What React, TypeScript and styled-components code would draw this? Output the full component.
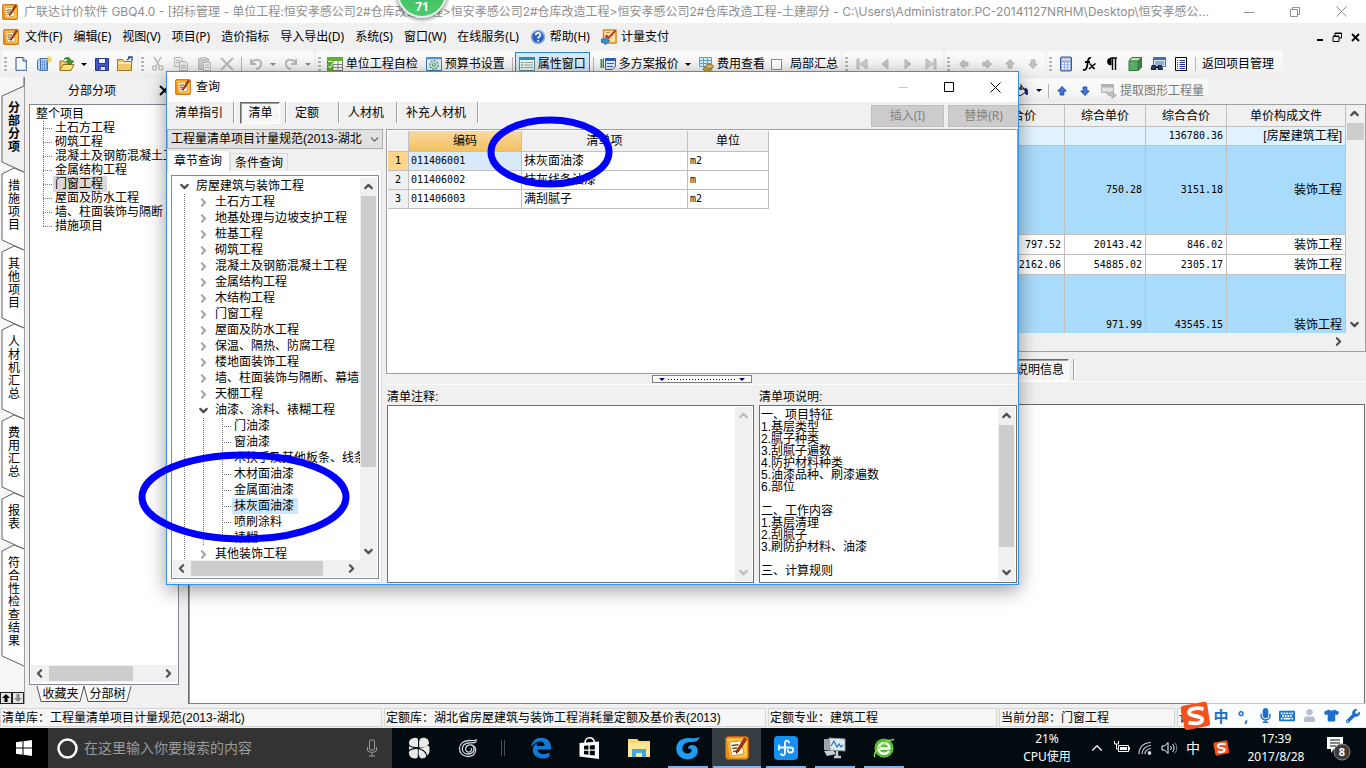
import React from 'react';
import styled, { createGlobalStyle, css } from 'styled-components';
import { ChevronDown, ChevronLeft, ChevronRight, ChevronUp } from 'lucide-react';
import { FaKeyboard, FaMicrophone, FaTshirt, FaUser, FaWrench } from 'react-icons/fa';

const songti = '"Liberation Sans", "Noto Sans CJK SC", sans-serif';
const yahei = '"Noto Sans", "Noto Sans CJK SC", sans-serif';
const digits = '"DejaVu Sans Mono", "Noto Sans CJK SC", monospace';

const face = '#f0f0f0';
const gridLine = '#c0c0c0';
const hatch = css`
  background-color: #fff;
  background-image: repeating-conic-gradient(${face} 0 25%, #fff 0 50%);
  background-size: 2px 2px;
`;

const GlobalStyle = createGlobalStyle`
  *, *::before, *::after { box-sizing: border-box; }
  body { margin: 0; background: ${face}; overflow: hidden; }
  button, input, select, textarea { font: inherit; color: inherit; margin: 0; }
  button { padding: 0; border: 0; background: none; white-space: nowrap; }
  ul { list-style: none; margin: 0; padding: 0; }
  svg { display: block; flex: none; }
`;

const Desktop = styled.div`
  position: relative;
  display: flex;
  flex-direction: column;
  min-height: 100vh;
  overflow: hidden;
  background: ${face};
  color: #000;
  font: 12px/16px ${songti};
  white-space: nowrap;
`;

/* ---------- Title bar and menu ---------- */

const TitleBar = styled.header`
  display: flex;
  align-items: center;
  height: 23px;
  padding: 0 2px;
  background: #fff;
  color: #8f8f8f;
  font-family: Inter, "Noto Sans CJK SC", sans-serif;
`;

const TitleText = styled.h1`
  flex: 1;
  margin: 0;
  padding-left: 6px;
  font-size: 12px;
  font-weight: 400;
  overflow: hidden;
  text-overflow: ellipsis;
`;

const CaptionButton = styled.button<{ $faded?: boolean }>`
  display: flex;
  align-items: center;
  justify-content: center;
  width: 46px;
  height: 100%;
  color: ${(p) => (p.$faded ? '#c8c8c8' : 'inherit')};
`;

const MenuBar = styled.nav`
  display: flex;
  align-items: center;
  height: 28px;
  padding: 0 6px 0 3px;
  font-family: ${yahei};
`;

const MenuItem = styled.button`
  display: flex;
  align-items: center;
  gap: 4px;
  padding: 0 5px 0 6px;
`;

const MdiButtons = styled.div`
  display: flex;
  align-items: center;
  gap: 8px;
  margin-left: auto;
`;

/* ---------- Toolbars ---------- */

const Toolbar = styled.div`
  display: flex;
  gap: 2px;
  height: 26px;
  padding: 0 2px;
  font-family: ${yahei};
`;

const ToolGroup = styled.div<{ $width?: number }>`
  display: flex;
  align-items: center;
  width: ${(p) => (p.$width ? `${p.$width}px` : 'auto')};
  padding-left: 2px;
  border-radius: 3px;
  background: linear-gradient(#fbfbfb, #f6f6f6 60%, #ececec);
`;

const Grip = styled.span`
  width: 3px;
  height: 15px;
  margin-right: 2px;
  background: repeating-linear-gradient(#b4b4b4 0 2px, transparent 2px 4px);
`;

const ToolButton = styled.button<{ $disabled?: boolean }>`
  display: flex;
  align-items: center;
  justify-content: center;
  width: 23px;
  height: 23px;
  color: ${(p) => (p.$disabled ? '#b9b9b9' : '#222')};
`;

const LabelButton = styled.button<{ $active?: boolean; $muted?: boolean }>`
  display: flex;
  align-items: center;
  gap: 3px;
  height: 24px;
  padding: 0 4px;
  color: ${(p) => (p.$muted ? '#777' : '#000')};
  ${(p) => p.$active && 'background: #d9e8f5; box-shadow: inset 0 0 0 1px #2a7fd0;'}
`;

const DropArrow = styled.button<{ $disabled?: boolean }>`
  display: flex;
  align-items: center;
  justify-content: center;
  width: 12px;
  height: 23px;
  &::after {
    content: '';
    border: 3px solid transparent;
    border-bottom: 0;
    border-top-color: ${(p) => (p.$disabled ? '#8a8a8a' : '#000')};
  }
`;

const Divider = styled.span`
  width: 1px;
  height: 14px;
  margin: 0 2px 0 3px;
  background: #b4b4b4;
`;

const CheckLabel = styled.label`
  display: flex;
  align-items: center;
  gap: 8px;
  padding: 0 3px 0 2px;
  input {
    appearance: none;
    width: 11px;
    height: 11px;
    border: 1px solid #8c8c8c;
    background: #fff;
  }
`;

/* ---------- Workspace ---------- */

const Workspace = styled.main`
  display: flex;
  flex: 1;
`;

const SideTabs = styled.div`
  display: flex;
  flex-direction: column;
  width: 25px;
  padding-top: 13px;
  border-right: 1px solid #a0a0a0;
  ${hatch}
`;

const SideTab = styled.button<{ $active?: boolean }>`
  position: relative;
  display: block;
  padding: 12px 4px 14px 8px;
  font-size: 12px;
  line-height: 13px;
  text-align: left;
  white-space: normal;
  font-weight: ${(p) => (p.$active ? 700 : 400)};
  z-index: ${(p) => (p.$active ? 1 : 0)};
  svg {
    position: absolute;
    left: 0;
    top: 0;
    z-index: -1;
    overflow: visible;
  }
  span { position: relative; display: block; width: 12px; word-break: break-all; }
`;

const SideArrows = styled.div`
  display: flex;
  margin-top: auto;
  button {
    display: flex;
    align-items: center;
    justify-content: center;
    width: 12px;
    height: 12px;
    border: 1px solid #222;
    background: #e4e4e4;
  }
`;

const TreePanel = styled.section`
  display: flex;
  flex-direction: column;
  width: 154px;
  padding-left: 4px;
`;

const PanelHeader = styled.div`
  display: flex;
  align-items: center;
  justify-content: space-between;
  height: 27px;
  padding: 0 9px 0 39px;
  font-family: ${yahei};
`;

const TreeBox = styled.div`
  display: flex;
  flex: 1;
  flex-direction: column;
  min-height: 0;
  padding: 2px 1px;
  border: 1px solid #828790;
  background: #fff;
`;

const Tree = styled.ul<{ $indent: number }>`
  flex: 1;
  min-width: 0;
  padding-left: ${(p) => p.$indent}px;
  overflow: hidden;
`;

const TreeRow = styled.li<{ $height: number }>`
  display: flex;
  align-items: center;
  height: ${(p) => p.$height}px;
`;

const Guide = styled.span<{ $shape: 'line' | 'leaf' | 'last' | 'fold' }>`
  display: flex;
  flex: none;
  align-items: center;
  width: 19px;
  height: 100%;
  ${(p) =>
    p.$shape !== 'fold' &&
    css`
      padding-left: 9px;
      background: repeating-linear-gradient(#777 0 1px, transparent 1px 2px) 9px 0 / 1px
        ${p.$shape === 'last' ? '50%' : '100%'} no-repeat;
    `}
  ${(p) =>
    (p.$shape === 'leaf' || p.$shape === 'last') &&
    css`
      &::after {
        content: '';
        width: 9px;
        height: 1px;
        background: repeating-linear-gradient(90deg, #777 0 1px, transparent 1px 2px);
      }
    `}
  ${(p) =>
    p.$shape === 'fold' &&
    css`
      justify-content: center;
      color: #8a8a8a;
    `}
`;

const NodeText = styled.span<{ $tone?: string }>`
  padding: 0 4px 0 2px;
  line-height: inherit;
  background: ${(p) => p.$tone ?? 'transparent'};
`;

const SheetTabs = styled.div`
  display: flex;
  height: 19px;
  padding: 1px 0 2px 8px;
`;

const SheetTab = styled.button`
  position: relative;
  display: flex;
  align-items: center;
  justify-content: center;
  width: 47px;
  svg { position: absolute; inset: 0; overflow: visible; }
  span { position: relative; }
`;

/* ---------- Scroll bars ---------- */

const Scroll = styled.div<{ $vertical?: boolean; $size: number }>`
  display: flex;
  flex: none;
  flex-direction: ${(p) => (p.$vertical ? 'column' : 'row')};
  justify-content: space-between;
  ${(p) => (p.$vertical ? 'width' : 'height')}: ${(p) => p.$size}px;
  background: ${face};
  color: #555;
`;

const ScrollStep = styled.button<{ $disabled?: boolean }>`
  display: flex;
  align-items: center;
  justify-content: center;
  flex: none;
  width: 17px;
  height: 17px;
  color: ${(p) => (p.$disabled ? '#bdbdbd' : '#505050')};
`;

const ScrollTrack = styled.div<{ $vertical?: boolean }>`
  display: flex;
  flex: 1;
  flex-direction: ${(p) => (p.$vertical ? 'column' : 'row')};
`;

const ScrollThumb = styled.div<{ $share: number }>`
  flex: 0 0 ${(p) => p.$share}%;
  margin: 1px;
  background: #cdcdcd;
`;

function ScrollBar(props: { vertical?: boolean; share?: number; size?: number; disabled?: boolean; endOnly?: boolean }) {
  const { vertical, share = 0, size = 17, disabled, endOnly } = props;
  const Start = vertical ? ChevronUp : ChevronLeft;
  const End = vertical ? ChevronDown : ChevronRight;
  return (
    <Scroll $vertical={vertical} $size={size}>
      <ScrollStep $disabled={disabled} aria-label="向前滚动">
        {!endOnly && <Start size={13} strokeWidth={4} />}
      </ScrollStep>
      <ScrollTrack $vertical={vertical}>{share > 0 && <ScrollThumb $share={share} />}</ScrollTrack>
      <ScrollStep $disabled={disabled} aria-label="向后滚动">
        <End size={13} strokeWidth={4} />
      </ScrollStep>
    </Scroll>
  );
}

/* ---------- Main table ---------- */

const MainColumn = styled.section`
  display: flex;
  flex: 1;
  flex-direction: column;
  min-width: 0;
  padding-left: 9px;
`;

const EditToolbar = styled(Toolbar)`
  height: 27px;
  justify-content: flex-end;
  padding: 2px 158px 2px 0;
`;

const TableFrame = styled.div`
  border: 1px solid #a0a0a0;
`;

const TableViewport = styled.div`
  display: flex;
  height: 228px;
  overflow: hidden;
`;

const CostTable = styled.table`
  flex: 1;
  width: 100%;
  height: max-content;
  table-layout: fixed;
  border-spacing: 0;
  th, td {
    padding: 0 3px;
    border-right: 1px solid ${gridLine};
    border-bottom: 1px solid ${gridLine};
    font-weight: 400;
    overflow: hidden;
  }
  th { height: 22px; background: ${face}; }
  td { text-align: right; }
`;

const CostRow = styled.tr<{ $height: number; $tone: string }>`
  height: ${(p) => p.$height}px;
  background: ${(p) => p.$tone};
`;

const Num = styled.td`
  font-family: ${digits};
  font-size: 10px;
`;

const InfoTabs = styled.div`
  display: flex;
  align-items: center;
  justify-content: flex-end;
  gap: 4px;
  height: 30px;
  padding: 6px 291px 0 0;
  border-bottom: 1px solid #fff;
`;

const PressedTab = styled.button`
  height: 22px;
  padding: 0 4px 0 5px;
  border: 1px solid;
  border-color: #696969 #fff #fff #696969;
  box-shadow: inset 1px 1px 0 #a0a0a0;
  ${hatch}
`;

const Separator = styled.span`
  width: 2px;
  height: 21px;
  border-left: 1px solid #a0a0a0;
  border-right: 1px solid #fff;
`;

const InfoBody = styled.div`
  flex: 1;
  margin: 22px 1px 0 0;
  border: 1px solid #696969;
  border-bottom-color: #808080;
  box-shadow: inset 1px 0 0 #a0a0a0;
  background: #fff;
`;

/* ---------- Status bar ---------- */

const StatusBar = styled.footer`
  display: flex;
  gap: 2px;
  height: 24px;
  padding: 4px 0 1px;
`;

const StatusCell = styled.div<{ $width?: number }>`
  flex: ${(p) => (p.$width ? `0 0 ${p.$width}px` : '1')};
  padding: 0 1px;
  border: 1px solid #d4d4d4;
  line-height: 18px;
  background: #f6f6f6;
`;

/* ---------- Query dialog ---------- */

const Dialog = styled.div`
  position: absolute;
  left: 166px;
  top: 71px;
  display: flex;
  flex-direction: column;
  width: 853px;
  height: 514px;
  border: 1px solid #3393ee;
  background: ${face};
  box-shadow: 0 5px 18px rgba(0, 0, 0, 0.4);
`;

const DialogTitle = styled.div`
  display: flex;
  align-items: center;
  height: 30px;
  padding-left: 8px;
  background: #fff;
  font-family: ${yahei};
  h2 { flex: 1; margin: 0; padding-left: 5px; font-size: 12px; font-weight: 400; }
`;

const DialogTabs = styled.div`
  display: flex;
  height: 27px;
`;

const DialogTab = styled.button<{ $width: number }>`
  width: ${(p) => p.$width}px;
  height: 22px;
  padding-left: 8px;
  text-align: left;
`;

const DialogPressed = styled(PressedTab)`
  width: 40px;
  height: 22px;
  margin: 0 5px;
`;

const DialogActions = styled.div`
  display: flex;
  gap: 4px;
  margin-left: auto;
  padding: 3px 0 2px;
`;

const ActionButton = styled.button`
  width: 73px;
  border: 1px solid #bfbfbf;
  background: #ccc;
  color: #838383;
  font-family: ${yahei};
  &:last-child { width: 70px; border-right: 0; }
`;

const DialogBody = styled.div`
  display: flex;
  flex: 1;
  gap: 3px;
  min-height: 0;
`;

const ChapterPane = styled.div`
  display: flex;
  flex-direction: column;
  width: 216px;
`;

const Combo = styled.div`
  position: relative;
  select {
    appearance: none;
    display: block;
    width: 100%;
    height: 20px;
    padding: 0 20px 0 3px;
    border: 1px solid #adadad;
    border-radius: 0;
    background: #e1e1e1;
  }
  svg { position: absolute; right: 2px; top: 4px; color: #555; pointer-events: none; }
`;

const PageTabs = styled.div`
  display: flex;
  align-items: flex-end;
  height: 22px;
`;

const PageTab = styled.button<{ $active?: boolean }>`
  height: ${(p) => (p.$active ? 21 : 18)}px;
  padding: ${(p) => (p.$active ? '0 7px 0 6px' : '0 4px')};
  border: 1px solid #dcdcdc;
  border-bottom: 0;
  background: ${(p) => (p.$active ? '#fff' : face)};
`;

const PageBody = styled.div`
  display: flex;
  flex: 1;
  min-height: 0;
  margin: 0 1px 1px 0;
  padding: 4px 2px 3px 4px;
  border-right: 1px solid #dcdcdc;
  border-bottom: 1px solid #dcdcdc;
  background: #fff;
`;

const ChapterBox = styled(TreeBox)`
  padding: 2px 1px 1px;
  min-width: 0;
`;

const TreeArea = styled.div`
  display: flex;
  flex: 1;
  min-height: 0;
`;

const ScrollArea = styled.div`
  padding-right: 17px;
  background: ${face};
`;

const QueryPane = styled.div`
  display: flex;
  flex: 1;
  flex-direction: column;
  min-width: 0;
`;

const ResultFrame = styled.div`
  height: 245px;
  padding: 1px;
  border: 1px solid #a0a0a0;
  background: #fff;
`;

const ResultTable = styled.table`
  width: 381px;
  table-layout: fixed;
  border-spacing: 0;
  th, td {
    height: 19px;
    padding: 0 2px;
    border-right: 1px solid ${gridLine};
    border-bottom: 1px solid ${gridLine};
    font-weight: 400;
    text-align: left;
    line-height: 18px;
  }
  thead th { height: 21px; background: ${face}; text-align: center; }
`;

const SortedHead = styled.th`
  && { background: linear-gradient(#f9d9a0, #f3c160); }
`;

const RowHead = styled.th<{ $current?: boolean }>`
  && {
    background: ${(p) => (p.$current ? '#ffd58c' : face)};
    font: 10px/18px ${digits};
    text-align: center;
  }
`;

const CodeCell = styled(Num)<{ $current?: boolean }>`
  background: ${(p) => (p.$current ? '#d9eafa' : '#fff')};
`;

const SplitRow = styled.div`
  display: flex;
  justify-content: center;
  height: 10px;
  padding: 1px 0;
`;

const Splitter = styled.button`
  display: flex;
  align-items: center;
  justify-content: space-between;
  width: 100px;
  padding: 0 6px;
  border: 1px solid #808080;
  background: #fff;
  i { border: 3px solid transparent; border-bottom: 0; border-top-color: #000080; }
  span { width: 68px; height: 1px; background: repeating-linear-gradient(90deg, #000080 0 1px, transparent 1px 3px); }
`;

const Notes = styled.div`
  display: flex;
  flex: 1;
  gap: 3px;
  min-height: 0;
`;

const Note = styled.div<{ $width?: number }>`
  display: flex;
  flex-direction: column;
  flex: ${(p) => (p.$width ? `0 0 ${p.$width}px` : '1')};
  padding-bottom: 1px;
  border-top: 1px solid #fff;
  label { height: 20px; padding: 4px 0 0 1px; }
`;

const NoteBox = styled.div`
  display: flex;
  flex: 1;
  min-height: 0;
  margin: 0 1px;
  padding: 1px;
  border: 1px solid #6e6e6e;
  background: #fff;
  textarea {
    flex: 1;
    min-width: 0;
    padding: 2px 0;
    border: 0;
    outline: 0;
    resize: none;
    overflow: hidden;
    background: #fff;
    line-height: 12px;
  }
`;

/* ---------- Overlays ---------- */

const Marker = styled.svg<{ $x: number; $y: number }>`
  position: absolute;
  left: ${(p) => p.$x}px;
  top: ${(p) => p.$y}px;
  fill: none;
  stroke: #0000ff;
  stroke-width: 7;
  pointer-events: none;
`;

const SpeedBall = styled.div`
  position: absolute;
  left: 397px;
  top: -32px;
  display: flex;
  align-items: flex-end;
  justify-content: center;
  width: 50px;
  height: 50px;
  border: 2px solid #e6f0e8;
  border-radius: 50%;
  background: linear-gradient(#35b558, #4ccb6c);
  box-shadow: 0 1px 5px rgba(0, 0, 0, 0.6);
  color: #fff;
  font: 700 12px/18px ${yahei};
`;

const ImeBar = styled.div`
  position: absolute;
  right: 0;
  bottom: 41px;
  display: flex;
  align-items: center;
  width: 172px;
  height: 24px;
  border-top: 1px solid #b5cbe3;
  background: #fbfdff;
  color: #1d6fc9;
  > svg { margin-left: -14px; }
`;

const ImeKey = styled.button<{ $faded?: boolean }>`
  display: flex;
  align-items: center;
  justify-content: center;
  width: 22px;
  color: ${(p) => (p.$faded ? '#b5bfd0' : 'inherit')};
  font: 700 15px/20px ${yahei};
`;

/* ---------- Taskbar ---------- */

const Taskbar = styled.footer`
  display: flex;
  height: 40px;
  background: #020c10;
  color: #fff;
  font-family: ${yahei};
`;

const StartButton = styled.button`
  display: flex;
  align-items: center;
  justify-content: center;
  width: 48px;
  background: #000;
`;

const SearchBox = styled.label`
  display: flex;
  align-items: center;
  gap: 5px;
  width: 344px;
  padding: 0 12px 0 8px;
  background: #333;
  color: #9a9a9a;
  font-size: 14px;
  input {
    flex: 1;
    min-width: 0;
    padding: 0;
    border: 0;
    outline: 0;
    background: transparent;
    &::placeholder { color: #9a9a9a; opacity: 1; }
  }
`;

const Pins = styled.div`
  display: flex;
  padding-left: 2px;
`;

const Pin = styled.button<{ $open?: boolean; $active?: boolean }>`
  display: flex;
  align-items: center;
  justify-content: center;
  width: 49px;
  background: ${(p) => (p.$active ? '#343d42' : 'transparent')};
  ${(p) =>
    (p.$open || p.$active) &&
    css`
      background-image: linear-gradient(#76b4f2, #76b4f2);
      background-repeat: no-repeat;
      background-position: 50% 100%;
      background-size: ${p.$active ? 48 : 40}px 2px;
    `}
`;

const PinDivider = styled.span`
  width: 4px;
  height: 16px;
  margin: 12px 11px 0 9px;
  border: solid #4a4f52;
  border-width: 0 1px;
`;

const Tray = styled.div`
  display: flex;
  align-items: center;
  margin-left: auto;
  padding-right: 5px;
  text-align: center;
`;

const TrayText = styled.div<{ $width: number }>`
  width: ${(p) => p.$width}px;
  line-height: 18px;
`;

const TrayIcon = styled.button<{ $width?: number }>`
  display: flex;
  align-items: center;
  justify-content: center;
  width: ${(p) => p.$width ?? 24}px;
  font-size: 14px;
`;

/* ---------- Icons ---------- */

const AppIcon = ({ size = 16 }: { size?: number }) => (
  <svg width={size} height={size} viewBox="0 0 24 24">
    <rect x="0.5" y="0.5" width="23" height="23" rx="3" fill="#f08c12" stroke="#b9580a" />
    <path d="M2 2.500h15l5 2v17H5z" fill="#ffc648" />
    <path d="M4 6l12-1 3 13-12 2z" fill="#fffbe8" stroke="#b9791c" strokeWidth="0.8" />
    <path d="M6.500 9.500l7-.8M7.200 12.500l5-.5M8 15.500l5-.4" stroke="#7a4a1c" strokeWidth="1.500" />
    <path d="M21.500 3.500l-7.500 11.500-2.800 2.500 .8-3.600L19.400 2z" fill="#b8340f" stroke="#6a1d06" strokeWidth="0.900" />
  </svg>
);

const Svg = ({ children, size = 16, stroke = 'currentColor' }: { children: React.ReactNode; size?: number; stroke?: string }) => (
  <svg width={size} height={size} viewBox="0 0 16 16" fill="none" stroke={stroke}>
    {children}
  </svg>
);

const NewIcon = () => (
  <Svg stroke="#35507c"><path d="M3 1.500h7l3.500 3.500v9.500H3z" fill="#f4f9ff" /><path d="M10 1.500V5h3.500" fill="#cfe0f5" /><path d="M13 6v8H4" stroke="#8fb0dd" /></Svg>
);
const NewProjectIcon = () => (
  <Svg stroke="#4270b5"><path d="M1.500 4.500l3-2v12l-3-1zM4.500 2.500h7v12h-7z" fill="#bcd6f5" /><path d="M6.500 4v10M8.500 4v10M10.500 4v10M4.500 6h7M4.500 9h7M4.500 12h7" stroke="#5c8bd0" strokeWidth="0.700" /><path d="M13 0v7M9.500 3.500h7M10.500 1l5 5M15.500 1l-5 5" stroke="#f2c521" /></Svg>
);
const OpenIcon = () => (
  <Svg stroke="#9b6f10"><path d="M1 14V5h4l1.500 2H12v2" fill="#f6cf62" /><path d="M1 14.500l3-6h11l-3 6z" fill="#ffdf7c" /><path d="M5 3c3-3 7-1 7 2h3l-4 4-4-4h2.500C9.500 3 7 2.500 5 3z" fill="#34a62c" stroke="#1b6b18" strokeWidth="0.700" /></Svg>
);
const SaveIcon = () => (
  <Svg stroke="#25348a"><path d="M1.500 2.500h13v12h-13z" fill="#4358c4" /><path d="M4.500 2.500h7v5h-7z" fill="#eef2ff" /><path d="M4.500 10.500h7v4h-7z" fill="#e2e6f4" /><path d="M6 11.500v2" strokeWidth="2" /></Svg>
);
const FolderIcon = () => (
  <Svg stroke="#a07820"><path d="M.5 14.500v-11h5l1.500 2h7.500v9z" fill="#f0c96a" /><path d="M1 7h13" stroke="#fbe7ae" strokeWidth="2" /><path d="M10 4l4-3M11 1h4v4" stroke="#2b4b82" strokeWidth="1.300" /></Svg>
);
const CutIcon = () => (
  <Svg><path d="M4 1l5.500 9M11 1L6 10" strokeWidth="1.500" /><circle cx="4.500" cy="12" r="2" strokeWidth="1.500" /><circle cx="11" cy="12" r="2" strokeWidth="1.500" /></Svg>
);
const CopyIcon = () => (
  <Svg><path d="M1.500 1.500h6l2 2v7h-8z" fill="#eee" /><path d="M6.500 5.500h6l2 2v7h-8z" fill="#e9e9e9" /><path d="M3 4.500h4M3 6.500h3M8 9.500h5M8 11.500h5" /></Svg>
);
const PasteIcon = () => (
  <Svg><path d="M2.500 2.500h10v11h-10z" fill="#ccc" /><path d="M5 1.500h5v2H5z" fill="#eee" /><path d="M7.500 6.500h7v8h-7z" fill="#f3f3f3" /><path d="M9 9h4M9 11.500h4" /></Svg>
);
const DeleteIcon = () => <Svg><path d="M2 2l12 12M14 2L2 14" strokeWidth="1.800" /></Svg>;
const UndoIcon = () => <Svg><path d="M3 3v5h5M3.500 7.500C6 2 13 3 13 7.500c0 3-2 5-5 5.500" strokeWidth="2" /></Svg>;
const RedoIcon = () => <Svg><path d="M13 3v5H8M12.500 7.500C10 2 3 3 3 7.500c0 3 2 5 5 5.500" strokeWidth="2" /></Svg>;
const SheetCheckIcon = () => (
  <Svg stroke="#777"><path d="M.5 1.500h15v13H.5z" fill="#fff" /><path d="M0 3h16" stroke="#62b230" strokeWidth="4" /><path d="M0 8.500h16M0 11.500h16M6 5v10M11 5v10" stroke="#888" /><path d="M1 6h5v9H1z" fill="#5cab2d" stroke="none" /><path d="M1.500 10l1.500 2 3-5" stroke="#fff" /></Svg>
);
const SettingsSheetIcon = () => (
  <Svg stroke="#3f78ae"><path d="M.5 1.500h15v13H.5z" fill="#e9f3fa" /><path d="M0 2.500h16" stroke="#5ba0d8" strokeWidth="2" /><circle cx="8" cy="9" r="4" stroke="#6fae83" strokeWidth="2" strokeDasharray="2 1" /><circle cx="8" cy="9" r="1.500" stroke="#4b9664" /></Svg>
);
const WindowIcon = () => (
  <Svg stroke="#5d8f95"><path d="M.5 1.500h15v13H.5z" fill="#eef7f4" /><path d="M0 2.500h16" stroke="#2494b8" strokeWidth="3" /><path d="M2 6.500h2M2 9h2M2 11.500h2" stroke="#3a9a60" /><path d="M5 6.500h9M5 9h9M5 11.500h9" stroke="#96aaa9" /></Svg>
);
const PlansIcon = () => (
  <Svg stroke="#2e62b8"><path d="M1.500 3v9" stroke="#2a9a3c" strokeWidth="2" /><path d="M3.500 2v10" stroke="#d2402e" /><path d="M5.500 2.500h10v8l-3 3h-7z" fill="#e3eefc" /><path d="M5 4h10.500" strokeWidth="2" /><path d="M7 7.500h7M7 10.500h6" /></Svg>
);
const FeeIcon = () => (
  <Svg stroke="#5fa6c8"><path d="M1.500 1.500h12v9h-12z" fill="#d8f1fb" /><path d="M1.500 4.500h12M1.500 7.500h12M5.500 1.500v9M9.500 1.500v9" /><ellipse cx="9.500" cy="13" rx="4.500" ry="2" fill="#d8a94c" stroke="#9a7122" /><ellipse cx="11.500" cy="10.500" rx="4" ry="2" fill="#e8bf63" stroke="#9a7122" /></Svg>
);
const FirstIcon = () => <Svg><path d="M3 3h2v10H3zM13 3v10L6 8z" fill="#cfcfcf" /></Svg>;
const PrevIcon = () => <Svg><path d="M11 3v10L5 8z" fill="#c4c4c4" /></Svg>;
const NextIcon = () => <Svg><path d="M5 3v10l6-5z" fill="#c4c4c4" /></Svg>;
const LastIcon = () => <Svg><path d="M11 3h2v10h-2zM3 3v10l7-5z" fill="#cfcfcf" /></Svg>;
const Arrow = ({ turn, tone = '#c4c4c4', edge = '#b0b0b0' }: { turn: number; tone?: string; edge?: string }) => (
  <Svg stroke={edge}><path transform={`rotate(${turn} 8 8)`} d="M3.500 8L8 3.800v2.400h4v3.600H8v2.400z" fill={tone} /></Svg>
);
const CalcIcon = () => (
  <Svg stroke="#3556a0"><rect x="2.500" y="1" width="11" height="14" rx="1" fill="#8fb1ea" /><path d="M4 3.500h8" stroke="#f4d2c6" strokeWidth="2" /><path d="M4 7.500h8M4 10h8M4 12.500h8" stroke="#fff" strokeWidth="1.500" strokeDasharray="2 1" /></Svg>
);
const FxIcon = () => (
  <Svg stroke="#000"><path d="M10 2C7.500 1 7 4 6.500 8S5 15 2 13.500M4 6h5" strokeWidth="1.800" /><path d="M8.500 8c2-1 2.500 5 5.500 4.500M14.500 7.500L8 13" strokeWidth="1.500" /></Svg>
);
const PilcrowIcon = () => (
  <Svg stroke="#000"><path d="M7 2a3.500 3.500 0 0 0 0 7z" fill="#000" /><path d="M7 2h6M8.500 2v12M11.500 2v12" strokeWidth="1.400" /></Svg>
);
const CubeIcon = () => (
  <Svg stroke="#33763a"><path d="M2 5l3-3.500h9.500V11L11 14.500H2z" fill="#5cab62" /><path d="M2 5l3-3.500h9.500L11 5z" fill="#b6e2b5" /><path d="M11 5v9.500L14.500 11V1.500z" fill="#3b8544" /></Svg>
);
const FindSheetIcon = () => (
  <Svg stroke="#4a6da8"><path d="M3.500 1.500h12v9h-12z" fill="#dce9fa" /><path d="M3.500 3h12" strokeWidth="2" /><path d="M5 6h9M5 8h9" /><path d="M2 9.500h3.500l.5 4H1zM8 9.500h3.500l1 4H8z" fill="#2e3c55" stroke="#1d2638" /><path d="M5 11h4" stroke="#1d2638" strokeWidth="2" /></Svg>
);
const ListIcon = () => (
  <Svg stroke="#000"><path d="M2.500 1.500h11v13h-11z" fill="#fff" /><path d="M4 4.500h1M4 6.500h1M4 8.500h1M4 10.500h1M4 12.500h1M6.500 4.500H12M6.500 6.500H12M6.500 8.500H12M6.500 10.500H12M6.500 12.500H12" stroke="#1d2d9a" /></Svg>
);
const ExtractIcon = () => (
  <Svg stroke="#b2b2b2"><path d="M.5 1.500h12v8H.5z" fill="#e2e2e2" /><path d="M0 3h13" strokeWidth="3" /><path d="M5 8c2 3 4 3 6 3V8.500l4.500 4-4.500 3V13c-3 0-5-1-6-5z" fill="#bdbdbd" /></Svg>
);
const PaintIcon = () => (
  <Svg stroke="#111"><path d="M3 8l6-5 4 6-6 4z" fill="#fff" /><path d="M8 1v6M5 6h6" /><path d="M12 5c3 1 3 4 2 7-2-1-2-3-2-7z" fill="#12237d" stroke="#12237d" /></Svg>
);
const HelpIcon = () => (
  <Svg><circle cx="8" cy="8" r="6.500" fill="#2c62c8" stroke="#8faedf" strokeWidth="1.500" /><path d="M5.800 6.200c0-3 4.600-3 4.600-.3 0 1.600-2.300 1.700-2.300 3.600M8.100 11v1.600" stroke="#fff" strokeWidth="1.700" /></Svg>
);
const PayIcon = () => (
  <Svg stroke="#e0851c"><path d="M2.500 1h12.500v13H2.500z" fill="#ffe6a6" strokeWidth="1.500" /><path d="M5 6l2.500 3L14.500 1.500" stroke="#c03a1c" strokeWidth="2" /><path d="M5 3.500h4" stroke="#b98a58" /><path d="M0 10h4V7.500L9 12l-5 4v-2.500H0z" fill="#2c93dc" stroke="#1764a6" strokeWidth="0.600" /></Svg>
);
const MinimizeIcon = () => <svg width="10" height="10" stroke="currentColor" fill="none"><path d="M0 5.500h10" /></svg>;
const MaximizeIcon = () => <svg width="10" height="10" stroke="currentColor" fill="none"><path d="M.5.5h9v9h-9z" /></svg>;
const RestoreIcon = () => <svg width="10" height="10" stroke="currentColor" fill="none"><path d="M.5 2.500h7v7h-7zM2.500 2.500v-2h7v7h-2" /></svg>;
const CloseIcon = () => <svg width="11" height="11" stroke="currentColor" fill="none"><path d="M.5.5l10 10M10.500.5l-10 10" /></svg>;

const SogouIcon = ({ size }: { size: number }) => (
  <svg width={size} height={size} viewBox="0 0 28 28">
    <path d="M3 4.500L22 .8c2-.3 3 .5 3.300 2L28 20c.3 2-.5 3-2 3.300L7.500 27c-2 .4-3-.4-3.400-2L.8 8C.4 6 1 5 3 4.500z" fill="#f4511e" />
    <path d="M22 7.500C15 5.500 8 7.500 8.500 11c.5 4 12 2 12.200 6.300.1 3.200-6.700 4.700-12.700 2.700" fill="none" stroke="#fff" strokeWidth="3.600" />
  </svg>
);

const SwirlIcon = () => (
  <svg width="22" height="22" viewBox="0 0 22 22" fill="#e9e9e9">
    <path d="M10 10V3c0-2-2-2.500-4-2C3 1.500 1 3 1 6.500 1 9 4 10 10 10z" />
    <path d="M11.200 10.500c5 .5 8-1 9.800-4C21 3 19 1 16 .8c-3-.2-4.800 1.200-4.800 4z" />
    <path d="M11.500 11.600c4 1 7 3 7.500 7 2-1 2.800-3.500 2.500-7.500-.2-3-2-2.500-4-1.500-2 1-4 1.800-6 2z" />
    <path d="M11 12.200c-1 4-.5 7 2 9.300 3 0 5-.8 5.200-2.500-.5-3.500-3.500-5.500-7.200-6.800z" />
    <path d="M9.800 12C6 11.800 2.500 12.500.8 15c.2 4 2 6.200 6 6.500 2.500 0 3.400-1 3-4z" />
    <path d="M1 9v4c2-1.800 4.500-2 8-2C5.500 11 3 10.500 1 9z" />
  </svg>
);
const GIcon = ({ bold }: { bold?: boolean }) =>
  bold ? (
    <svg width="24" height="24" viewBox="0 0 24 24" fill="#1f9df0">
      <path d="M23.500 1c-1 4-4 5-8.500 5-6 0-9 3-8.500 7.500.5 4.500 7.500 5.500 9 1.500.7-2-1.500-3.300-3.500-2.200-.3-3.500 4-4.800 7-3 4 2.500 3.500 8.500-.5 11.500C12 26 1 22.500.3 13.500-.2 5 7 1.500 13 2c4 .3 8 .5 10.500-1z" />
    </svg>
  ) : (
    <svg width="20" height="20" viewBox="0 0 20 20" fill="none" stroke="#cfd3d4" strokeWidth="1.300">
      <path d="M19 1.500c-2 2-4 1-8 1C-2 3-1 18 9.500 18.500c9 .3 11-10 4-11.500-6-1-8 6-3.500 7 3 .5 4.500-2 3-4" />
      <path d="M18.500 3.500c-2 2-5 1.300-8 1.500-8 .8-8 10.500-1 11 6 .3 8-5 5.500-7.500" />
    </svg>
  );
const EdgeIcon = () => (
  <svg width="22" height="22" viewBox="0 0 22 22" fill="#0f7ad8">
    <path d="M1 10C2 4 6 .8 11.500.8 17.500.8 21 5 21 10v2.500H7.500c.3 5 7 6 12 3v4.200C12 24 2.500 20.500 2.800 12.500 3 9 5 7 8 6c-1 1-1.300 2-1.400 3h8c.3-6-8-6.500-13.600 1z" />
  </svg>
);
const StoreIcon = () => (
  <svg width="24" height="24" viewBox="0 0 24 24">
    <path d="M7 7c0-7 9-7 9.500 0" fill="none" stroke="#fff" strokeWidth="1.600" />
    <path d="M1.500 7L21 5.500V23L1.500 20.500z" fill="#fff" />
    <path d="M6 9.800l4.500-.3v4H6zM11.800 9.400l5-.4v4.500h-5zM6 14.800h4.500v4l-4.500-.5zM11.800 14.800h5v4.700l-5-.6z" fill="#020c10" />
  </svg>
);
const ExplorerIcon = () => (
  <svg width="22" height="20" viewBox="0 0 22 20">
    <path d="M0 1h9l2 2h11v16H0z" fill="#f7d673" />
    <path d="M0 5h22v14H0z" fill="#fde795" />
    <path d="M4 19v-8h14v8h-4v-4H8v4z" fill="#3fa9e0" />
  </svg>
);
const CrossIcon = () => (
  <svg width="24" height="24" viewBox="0 0 24 24" fill="none" stroke="#fff" strokeWidth="1.800" strokeLinecap="round">
    <rect width="24" height="24" rx="4" fill="#1590f5" stroke="none" />
    <path d="M15 6.500c-.5-2.500-4-2.500-4 .5v9.500c0 3-3 3.500-4 1.500M5 11.500h11.500c3.500 0 3.500 5 0 5-2 0-3-1-2.500-2.500M5 9.500v4" />
  </svg>
);
const MonitorIcon = () => (
  <svg width="24" height="22" viewBox="0 0 24 22">
    <path d="M1 2h10v11H1z" fill="#9ca5ab" /><path d="M1 14l9-1 3 4-9 2z" fill="#c7cdd0" />
    <path d="M6 1l16 1v12L7 13z" fill="#dfe9f0" stroke="#8b979e" />
    <path d="M8 9l3-5 3 6 2-3 2 3 2-2" fill="none" stroke="#3678b5" strokeWidth="1.300" />
    <path d="M14 14v5M11 20h7" stroke="#c7cdd0" strokeWidth="2.500" />
  </svg>
);
const GreenBrowserIcon = () => (
  <svg width="22" height="22" viewBox="0 0 24 24" fill="none">
    <circle cx="12" cy="12" r="10.500" fill="#54bf30" />
    <path d="M6 12.500h12c0-8-12-8-12 0 0 7 9 7 11.500 3" stroke="#fff" strokeWidth="2.600" />
    <path d="M2 22C-1 16 15 2 23 3" stroke="#9be05e" strokeWidth="1.500" />
  </svg>
);
const BatteryIcon = () => (
  <svg width="17" height="14" viewBox="0 0 17 14" fill="none" stroke="#fff">
    <path d="M5.500 4.500h10v6h-10zM16.500 6v3" /><path d="M7 6h7v3H7z" fill="#fff" stroke="none" /><path d="M1.500 0v3h4V0M3.500 3v5h2" />
  </svg>
);
const WifiIcon = () => (
  <svg width="14" height="14" viewBox="0 0 14 14" fill="none" stroke="#c9cdce" strokeWidth="1.200">
    <path d="M1 13C1 6 6 1.500 13 1.500M4 13c0-5 4-8.500 9-8.500M7 13c0-3 3-5.500 6-5.500" /><circle cx="11.500" cy="12" r="1.300" fill="#fff" />
  </svg>
);
const VolumeIcon = () => (
  <svg width="17" height="14" viewBox="0 0 17 14" fill="none" stroke="#fff">
    <path d="M1 5h2.500L7 1.500v11L3.500 9H1zM9.500 5c1 1 1 3 0 4M11.500 3c2 2 2 6 0 8" /><path d="M13.500 1.500c3 3 3 8 0 11" stroke="#8d9294" />
  </svg>
);
const NoticeIcon = () => (
  <svg width="26" height="26" viewBox="0 0 26 26">
    <path d="M2 2h16v12H9l-3 4v-4H2z" fill="#fff" /><path d="M5 5h10M5 8h10M5 11h6" stroke="#020c10" />
    <circle cx="17" cy="17" r="8" fill="#3c3c3c" stroke="#8a8a8a" />
    <text x="17" y="21" textAnchor="middle" fill="#fff" fontSize="11" fontWeight="700" fontFamily="Noto Sans">8</text>
  </svg>
);

/* ---------- Data ---------- */

const menus = ['文件(F)', '编辑(E)', '视图(V)', '项目(P)', '造价指标', '导入导出(D)', '系统(S)', '窗口(W)', '在线服务(L)'];
const sideTabs = ['分部分项', '措施项目', '其他项目', '人材机汇总', '费用汇总', '报表', '符合性检查结果'];
const sections = ['土石方工程', '砌筑工程', '混凝土及钢筋混凝土工程', '金属结构工程', '门窗工程', '屋面及防水工程', '墙、柱面装饰与隔断', '措施项目'];
const chapters = ['土石方工程', '地基处理与边坡支护工程', '桩基工程', '砌筑工程', '混凝土及钢筋混凝土工程', '金属结构工程', '木结构工程', '门窗工程', '屋面及防水工程', '保温、隔热、防腐工程', '楼地面装饰工程', '墙、柱面装饰与隔断、幕墙工程', '天棚工程'];
const paints = ['门油漆', '窗油漆', '木扶手及其他板条、线条油漆', '木材面油漆', '金属面油漆', '抹灰面油漆', '喷刷涂料', '裱糊'];
const costs = [
  { height: 19, tone: '#e1f3ff', cells: ['', '', '136780.36'], file: '[房屋建筑工程]' },
  { height: 89, tone: '#a9dbfa', cells: ['', '750.28', '3151.18'], file: '装饰工程' },
  { height: 20, tone: '#fff', cells: ['797.52', '20143.42', '846.02'], file: '装饰工程' },
  { height: 20, tone: '#fff', cells: ['2162.06', '54885.02', '2305.17'], file: '装饰工程' },
  { height: 100, tone: '#a9dbfa', cells: ['', '971.99', '43545.15'], file: '装饰工程' },
];
const results = [
  ['011406001', '抹灰面油漆', 'm2'],
  ['011406002', '抹灰线条油漆', 'm'],
  ['011406003', '满刮腻子', 'm2'],
];
const description = `一、项目特征
1.基层类型
2.腻子种类
3.刮腻子遍数
4.防护材料种类
5.油漆品种、刷漆遍数
6.部位

二、工作内容
1.基层清理
2.刮腻子
3.刷防护材料、油漆

三、计算规则`;

/* ---------- Parts ---------- */

function SideTabButton({ label, active }: { label: string; active?: boolean }) {
  const h = 26 + label.length * 13;
  const top = active ? 'M24 -13V-4L2 6' : 'M24 4L14 0L2 6';
  return (
    <SideTab $active={active}>
      <svg width="24" height={h}>
        <path d={`${top}V${h - 6}L24 ${h + 4}`} fill={active ? face : '#fff'} stroke="#606060" />
      </svg>
      <span>{label}</span>
    </SideTab>
  );
}

function Chapter({ label, open }: { label: string; open?: boolean }) {
  const Fold = open ? ChevronDown : ChevronRight;
  return (
    <TreeRow $height={16}>
      <Guide $shape="line" />
      <Guide $shape="fold"><Fold size={13} strokeWidth={4} color={open ? '#505050' : '#a6a6a6'} /></Guide>
      <NodeText>{label}</NodeText>
    </TreeRow>
  );
}

function SheetTabButton({ label }: { label: string }) {
  return (
    <SheetTab>
      <svg width="47" height="16"><path d="M0 0L4 15.500H43L47 0" fill="#fafafa" stroke="#555" /></svg>
      <span>{label}</span>
    </SheetTab>
  );
}

function MainToolbar() {
  return (
    <Toolbar>
      <ToolGroup $width={135}>
        <Grip />
        <ToolButton aria-label="新建"><NewIcon /></ToolButton>
        <ToolButton aria-label="新建项目"><NewProjectIcon /></ToolButton>
        <ToolButton aria-label="打开"><OpenIcon /></ToolButton>
        <DropArrow aria-label="最近文件" />
        <ToolButton aria-label="保存"><SaveIcon /></ToolButton>
        <ToolButton aria-label="目录"><FolderIcon /></ToolButton>
      </ToolGroup>
      <ToolGroup $width={175}>
        <Grip />
        <ToolButton $disabled aria-label="剪切"><CutIcon /></ToolButton>
        <ToolButton $disabled aria-label="复制"><CopyIcon /></ToolButton>
        <ToolButton $disabled aria-label="粘贴"><PasteIcon /></ToolButton>
        <ToolButton $disabled aria-label="删除"><DeleteIcon /></ToolButton>
        <Divider />
        <ToolButton $disabled aria-label="撤销"><UndoIcon /></ToolButton>
        <DropArrow $disabled aria-label="撤销列表" />
        <ToolButton $disabled aria-label="重做"><RedoIcon /></ToolButton>
        <DropArrow $disabled aria-label="重做列表" />
      </ToolGroup>
      <ToolGroup $width={525}>
        <Grip />
        <LabelButton><SheetCheckIcon />单位工程自检</LabelButton>
        <LabelButton><SettingsSheetIcon />预算书设置</LabelButton>
        <Divider />
        <LabelButton $active><WindowIcon />属性窗口</LabelButton>
        <Divider />
        <LabelButton><PlansIcon />多方案报价</LabelButton>
        <DropArrow aria-label="报价方案" />
        <LabelButton><FeeIcon />费用查看</LabelButton>
        <CheckLabel><input type="checkbox" />局部汇总</CheckLabel>
      </ToolGroup>
      <ToolGroup $width={100}>
        <Grip />
        <ToolButton $disabled aria-label="首条"><FirstIcon /></ToolButton>
        <ToolButton $disabled aria-label="上一条"><PrevIcon /></ToolButton>
        <ToolButton $disabled aria-label="下一条"><NextIcon /></ToolButton>
        <ToolButton $disabled aria-label="末条"><LastIcon /></ToolButton>
      </ToolGroup>
      <ToolGroup $width={100}>
        <Grip />
        <ToolButton $disabled aria-label="左移"><Arrow turn={0} /></ToolButton>
        <ToolButton $disabled aria-label="右移"><Arrow turn={180} /></ToolButton>
        <ToolButton $disabled aria-label="上移"><Arrow turn={90} /></ToolButton>
        <ToolButton $disabled aria-label="下移"><Arrow turn={270} /></ToolButton>
      </ToolGroup>
      <ToolGroup $width={236}>
        <Grip />
        <ToolButton aria-label="计算器"><CalcIcon /></ToolButton>
        <ToolButton aria-label="公式"><FxIcon /></ToolButton>
        <ToolButton aria-label="段落"><PilcrowIcon /></ToolButton>
        <ToolButton aria-label="图元"><CubeIcon /></ToolButton>
        <ToolButton aria-label="查找"><FindSheetIcon /></ToolButton>
        <ToolButton aria-label="列表"><ListIcon /></ToolButton>
        <Divider />
        <LabelButton>返回项目管理</LabelButton>
      </ToolGroup>
    </Toolbar>
  );
}

function QueryDialog() {
  return (
    <Dialog role="dialog" aria-label="查询">
      <DialogTitle>
        <AppIcon />
        <h2>查询</h2>
        <CaptionButton $faded aria-label="最小化"><MinimizeIcon /></CaptionButton>
        <CaptionButton aria-label="最大化"><MaximizeIcon /></CaptionButton>
        <CaptionButton aria-label="关闭"><CloseIcon /></CaptionButton>
      </DialogTitle>
      <DialogTabs>
        <DialogTab $width={66}>清单指引</DialogTab>
        <Separator />
        <DialogPressed>清单</DialogPressed>
        <Separator />
        <DialogTab $width={51}>定额</DialogTab>
        <Separator />
        <DialogTab $width={56}>人材机</DialogTab>
        <Separator />
        <DialogTab $width={79}>补充人材机</DialogTab>
        <Separator />
        <DialogActions>
          <ActionButton disabled>插入(I)</ActionButton>
          <ActionButton disabled>替换(R)</ActionButton>
        </DialogActions>
      </DialogTabs>
      <DialogBody>
        <ChapterPane>
          <Combo>
            <select aria-label="清单规范"><option>工程量清单项目计量规范(2013-湖北</option></select>
            <ChevronDown size={13} />
          </Combo>
          <PageTabs>
            <PageTab $active>章节查询</PageTab>
            <PageTab>条件查询</PageTab>
          </PageTabs>
          <PageBody>
            <ChapterBox>
              <TreeArea>
                <Tree $indent={2}>
                  <TreeRow $height={16}>
                    <Guide $shape="fold"><ChevronDown size={13} strokeWidth={4} color="#505050" /></Guide>
                    <NodeText>房屋建筑与装饰工程</NodeText>
                  </TreeRow>
                  {chapters.map((label) => <Chapter key={label} label={label} />)}
                  <Chapter label="油漆、涂料、裱糊工程" open />
                  {paints.map((label, i) => (
                    <TreeRow key={label} $height={16}>
                      <Guide $shape="line" />
                      <Guide $shape="line" />
                      <Guide $shape={i === paints.length - 1 ? 'last' : 'leaf'} />
                      <NodeText $tone={label === '抹灰面油漆' ? '#cce8ff' : undefined}>{label}</NodeText>
                    </TreeRow>
                  ))}
                  <Chapter label="其他装饰工程" />
                </Tree>
                <ScrollBar vertical share={78} />
              </TreeArea>
              <ScrollArea>
                <ScrollBar share={86} />
              </ScrollArea>
            </ChapterBox>
          </PageBody>
        </ChapterPane>
        <QueryPane>
          <ResultFrame>
            <ResultTable>
              <colgroup>
                <col width="21" /><col width="113" /><col width="166" /><col width="81" />
              </colgroup>
              <thead>
                <tr><th /><SortedHead>编码</SortedHead><th>清单项</th><th>单位</th></tr>
              </thead>
              <tbody>
                {results.map(([code, name, unit], i) => (
                  <tr key={code}>
                    <RowHead $current={i === 0}>{i + 1}</RowHead>
                    <CodeCell $current={i === 0}>{code}</CodeCell>
                    <td>{name}</td>
                    <Num>{unit}</Num>
                  </tr>
                ))}
              </tbody>
            </ResultTable>
          </ResultFrame>
          <SplitRow>
            <Splitter aria-label="折叠说明"><i /><span /><i /></Splitter>
          </SplitRow>
          <Notes>
            <Note $width={369}>
              <label htmlFor="remark">清单注释:</label>
              <NoteBox>
                <textarea id="remark" readOnly />
                <ScrollBar vertical disabled />
              </NoteBox>
            </Note>
            <Note>
              <label htmlFor="detail">清单项说明:</label>
              <NoteBox>
                <textarea id="detail" readOnly defaultValue={description} />
                <ScrollBar vertical share={87} />
              </NoteBox>
            </Note>
          </Notes>
        </QueryPane>
      </DialogBody>
    </Dialog>
  );
}

const MainScroll = styled.div`
  padding: 0 18px 1px 0;
  background: ${face};
`;

export default function App() {
  return (
    <Desktop>
      <GlobalStyle />
      <TitleBar>
        <AppIcon />
        <TitleText>
          广联达计价软件 GBQ4.0 - [招标管理 - 单位工程:恒安孝感公司2#仓库改造工程&gt;恒安孝感公司2#仓库改造工程&gt;恒安孝感公司2#仓库改造工程-土建部分 - C:\Users\Administrator.PC-20141127NRHM\Desktop\恒安孝感公...
        </TitleText>
        <CaptionButton aria-label="最小化"><MinimizeIcon /></CaptionButton>
        <CaptionButton aria-label="还原"><RestoreIcon /></CaptionButton>
        <CaptionButton aria-label="关闭"><CloseIcon /></CaptionButton>
      </TitleBar>

      <MenuBar>
        <AppIcon />
        {menus.map((label) => <MenuItem key={label}>{label}</MenuItem>)}
        <MenuItem><HelpIcon />帮助(H)</MenuItem>
        <MenuItem><PayIcon />计量支付</MenuItem>
        <MdiButtons>
          <button aria-label="最小化子窗口"><svg width="8" height="10" stroke="#000" strokeWidth="2"><path d="M1 8h6" /></svg></button>
          <button aria-label="还原子窗口"><svg width="11" height="10" stroke="#000" fill="none"><path d="M1 4.500h6v5H1zM3 4V1h6.500v5H7M1 4h6M3 1.500h6" /></svg></button>
          <button aria-label="关闭子窗口"><svg width="9" height="9" stroke="#000" strokeWidth="1.800"><path d="M1 1l7 7M8 1L1 8" /></svg></button>
        </MdiButtons>
      </MenuBar>

      <MainToolbar />

      <Workspace>
        <SideTabs>
          {sideTabs.map((label, i) => <SideTabButton key={label} label={label} active={i === 0} />)}
          <SideArrows>
            <button aria-label="向上"><svg width="8" height="8"><path d="M4 0l4 4H5.500v4h-3V4H0z" /></svg></button>
            <button aria-label="向下"><svg width="8" height="8"><path d="M4 8L0 4h2.500V0h3v4H8z" fill="#888" /></svg></button>
          </SideArrows>
        </SideTabs>

        <TreePanel>
          <PanelHeader>
            分部分项
            <button aria-label="关闭面板"><svg width="11" height="11" stroke="#000" strokeWidth="2"><path d="M1 1l9 9M10 1L1 10" /></svg></button>
          </PanelHeader>
          <TreeBox>
            <Tree $indent={3}>
              <TreeRow $height={14}><NodeText>整个项目</NodeText></TreeRow>
              {sections.map((label, i) => (
                <TreeRow key={label} $height={14}>
                  <Guide $shape={i === sections.length - 1 ? 'last' : 'leaf'} />
                  <NodeText $tone={label === '门窗工程' ? '#d9d9d9' : undefined}>{label}</NodeText>
                </TreeRow>
              ))}
            </Tree>
            <ScrollBar share={75} />
          </TreeBox>
          <SheetTabs>
            <SheetTabButton label="收藏夹" />
            <SheetTabButton label="分部树" />
          </SheetTabs>
        </TreePanel>

        <MainColumn>
          <EditToolbar>
            <ToolGroup>
              <ToolButton aria-label="填充"><PaintIcon /></ToolButton>
              <DropArrow aria-label="填充颜色" />
              <Divider />
              <ToolButton aria-label="上移"><Arrow turn={90} tone="#3f78e0" edge="#1f4ba8" /></ToolButton>
              <ToolButton aria-label="下移"><Arrow turn={270} tone="#3f78e0" edge="#1f4ba8" /></ToolButton>
              <LabelButton $muted><ExtractIcon />提取图形工程量</LabelButton>
            </ToolGroup>
          </EditToolbar>
          <TableFrame>
            <TableViewport>
              <CostTable>
                <colgroup>
                  <col /><col width="81" /><col width="81" /><col width="81" /><col width="119" />
                </colgroup>
                <thead>
                  <tr><th /><th>合价</th><th>综合单价</th><th>综合合价</th><th>单价构成文件</th></tr>
                </thead>
                <tbody>
                  {costs.map((row, i) => (
                    <CostRow key={i} $height={row.height} $tone={row.tone}>
                      <td />
                      {row.cells.map((value, j) => <Num key={j}>{value}</Num>)}
                      <td>{row.file}</td>
                    </CostRow>
                  ))}
                </tbody>
              </CostTable>
              <ScrollBar vertical share={9} size={19} />
            </TableViewport>
            <MainScroll><ScrollBar endOnly /></MainScroll>
          </TableFrame>
          <InfoTabs>
            <PressedTab>说明信息</PressedTab>
            <Separator />
          </InfoTabs>
          <InfoBody />
        </MainColumn>
      </Workspace>

      <StatusBar>
        <StatusCell $width={382}>清单库：工程量清单项目计量规范(2013-湖北)</StatusCell>
        <StatusCell $width={382}>定额库：湖北省房屋建筑与装饰工程消耗量定额及基价表(2013)</StatusCell>
        <StatusCell $width={229}>定额专业：建筑工程</StatusCell>
        <StatusCell $width={176}>当前分部：门窗工程</StatusCell>
        <StatusCell>计</StatusCell>
      </StatusBar>

      <Taskbar>
        <StartButton aria-label="开始">
          <svg width="16" height="16" fill="#fff"><path d="M0 2.300l6.500-1v6.200H0zM7.500 1.200L16 0v7.500H7.500zM0 8.500h6.500v6.200l-6.500-1zM7.500 8.500H16V16l-8.500-1.200z" /></svg>
        </StartButton>
        <SearchBox>
          <svg width="23" height="23"><circle cx="11.500" cy="11.500" r="9" fill="none" stroke="#fff" strokeWidth="2.500" /></svg>
          <input placeholder="在这里输入你要搜索的内容" />
          <svg width="16" height="18" viewBox="0 0 16 18" fill="none" stroke="#9a9a9a"><rect x="5.500" y="1" width="5" height="10" rx="1" /><path d="M3.500 8v3c0 3 9 3 9 0V8M8 13.500V17M5 17h6" /></svg>
        </SearchBox>
        <Pins>
          <Pin aria-label="浏览器"><SwirlIcon /></Pin>
          <Pin aria-label="广联达"><GIcon /></Pin>
          <PinDivider />
          <Pin aria-label="Edge"><EdgeIcon /></Pin>
          <Pin aria-label="应用商店"><StoreIcon /></Pin>
          <Pin aria-label="文件资源管理器"><ExplorerIcon /></Pin>
          <Pin $open aria-label="广联达工作台"><GIcon bold /></Pin>
          <Pin $active aria-label="计价软件"><AppIcon size={24} /></Pin>
          <Pin $open aria-label="加密锁"><CrossIcon /></Pin>
          <Pin $open aria-label="任务管理器"><MonitorIcon /></Pin>
          <Pin $open aria-label="绿色浏览器"><GreenBrowserIcon /></Pin>
        </Pins>
        <Tray>
          <TrayText $width={76}>21%<br />CPU使用</TrayText>
          <TrayIcon aria-label="显示隐藏图标"><ChevronUp size={18} strokeWidth={1.500} /></TrayIcon>
          <TrayIcon aria-label="电源"><BatteryIcon /></TrayIcon>
          <TrayIcon aria-label="网络"><WifiIcon /></TrayIcon>
          <TrayIcon aria-label="音量"><VolumeIcon /></TrayIcon>
          <TrayIcon>中</TrayIcon>
          <TrayIcon $width={32} aria-label="输入法"><SogouIcon size={16} /></TrayIcon>
          <TrayText $width={78}>17:39<br />2017/8/28</TrayText>
          <TrayIcon $width={46} aria-label="通知"><NoticeIcon /></TrayIcon>
        </Tray>
      </Taskbar>

      <QueryDialog />

      <SpeedBall>71</SpeedBall>
      <Marker $x={487} $y={116} width="127" height="73"><ellipse cx="63" cy="36" rx="59" ry="32" /></Marker>
      <Marker $x={138} $y={451} width="213" height="93"><ellipse cx="106" cy="46" rx="102" ry="42" /></Marker>

      <ImeBar>
        <SogouIcon size={30} />
        <ImeKey>中</ImeKey>
        <ImeKey>°,</ImeKey>
        <ImeKey aria-label="语音"><FaMicrophone size={15} /></ImeKey>
        <ImeKey aria-label="软键盘"><FaKeyboard size={16} /></ImeKey>
        <ImeKey $faded aria-label="账户"><FaUser size={13} /></ImeKey>
        <ImeKey aria-label="皮肤"><FaTshirt size={15} /></ImeKey>
        <ImeKey aria-label="工具箱"><FaWrench size={14} /></ImeKey>
      </ImeBar>
    </Desktop>
  );
}
